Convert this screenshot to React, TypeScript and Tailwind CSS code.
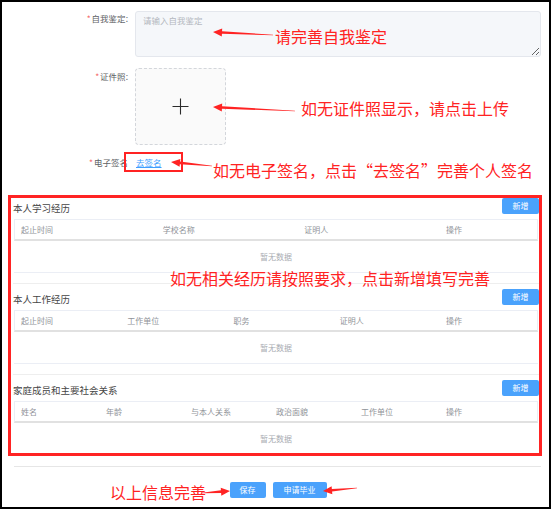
import React from 'react';

const FONT = '"Noto Sans CJK SC", "Noto Sans", sans-serif';

type Section = { title: string; cols: string[] };

const sections: Section[] = [
    { title: '本人学习经历', cols: ['起止时间', '学校名称', '证明人'] },
    { title: '本人工作经历', cols: ['起止时间', '工作单位', '职务', '证明人'] },
    { title: '家庭成员和主要社会关系', cols: ['姓名', '年龄', '与本人关系', '政治面貌', '工作单位'] },
];

// tapered arrow, like the ones drawn by screenshot tools
const arrowPoints = (tx: number, ty: number, hx: number, hy: number) => {
    const dx = hx - tx;
    const dy = hy - ty;
    const len = Math.hypot(dx, dy);
    const ux = dx / len;
    const uy = dy / len;
    const nx = -uy;
    const ny = ux;
    const headLen = 9;
    const headW = 4;
    const neckW = 1.3;
    const bx = hx - ux * headLen;
    const by = hy - uy * headLen;
    const pts = [
        [tx + nx * 0.3, ty + ny * 0.3],
        [bx + nx * neckW, by + ny * neckW],
        [bx + nx * headW, by + ny * headW],
        [hx, hy],
        [bx - nx * headW, by - ny * headW],
        [bx - nx * neckW, by - ny * neckW],
        [tx - nx * 0.3, ty - ny * 0.3],
    ];
    return pts.map((p) => p.join(',')).join(' ');
};

const arrows = [
    [273, 35, 213, 32],
    [295, 111, 213, 107],
    [212, 166, 171, 162],
    [202, 493, 230, 491],
    [357, 488, 323, 491],
];

const Note: React.FC<{ x: number; y: number; children: React.ReactNode }> = ({ x, y, children }) => (
    <div className="absolute text-[16px] leading-[16px] text-[#ff2323] whitespace-nowrap" style={{ left: x, top: y - 8 }}>
        {children}
    </div>
);

const Label: React.FC<{ text: string; colon?: boolean }> = ({ text, colon = true }) => (
    <div className="w-[133px] shrink-0 pr-[7px] text-right text-[8.5px] leading-[14px] text-[#606266]">
        <span className="text-[#f56c6c] mr-[1px]">*</span>
        {text}
        {colon ? ':' : ''}
    </div>
);

const App: React.FC = () => {
    return (
        <div lang="zh-CN" className="relative w-[551px] h-[510px] bg-white" style={{ fontFamily: FONT }}>
            <div className="w-[551px] h-[509px] border-2 border-black">
                <div className="pt-[9px] pr-[8px]">
                    {/* 自我鉴定 */}
                    <div className="flex">
                        <Label text="自我鉴定" />
                        <textarea
                            placeholder="请输入自我鉴定"
                            className="flex-1 h-[46px] px-[7px] py-[1px] bg-[#f5f7fa] border border-[#e4e7ed] rounded-[3px] text-[8.5px] leading-[14px] text-[#606266] placeholder:text-[#b4b8bf] outline-none"
                        />
                    </div>

                    {/* 证件照 */}
                    <div className="flex mt-[11px]">
                        <div className="pt-[1px]">
                            <Label text="证件照" />
                        </div>
                        <div className="w-[91px] h-[77px] bg-[#fafafa] border border-dashed border-[#d3d6db] rounded-[4px] flex items-center justify-center">
                            <svg width="17" height="17" viewBox="0 0 17 17">
                                <path d="M8.5 0.5V16.5M0.5 8.5H16.5" stroke="#2b2b2b" strokeWidth="1.1" />
                            </svg>
                        </div>
                    </div>

                    {/* 电子签名 */}
                    <div className="flex mt-[10px]">
                        <Label text="电子签名" colon={false} />
                        <a className="ml-[1px] text-[8.5px] leading-[14px] text-[#409eff] underline underline-offset-[1px]">去签名</a>
                    </div>
                </div>

                {/* 经历 */}
                <div className="mt-[29px] pl-[11px] pr-[10px]">
                    {sections.map((s, i) => (
                        <div key={s.title} className={i > 0 ? 'mt-[5px]' : ''}>
                            <div className="flex items-center justify-between h-[16px]">
                                <span className="pt-[4px] text-[9.5px] leading-[12px] text-[#454545]">{s.title}</span>
                                <button className="w-[37px] h-[16px] rounded-[2px] bg-[#4aa2fc] text-white text-[8px] leading-none">新增</button>
                            </div>
                            <div className="mt-[5px] mx-[1px]">
                                <div
                                    className="h-[22px] border border-[#ebeef5] border-b-2 border-b-[#e1e1e1] grid items-center text-[8px] text-[#909399]"
                                    style={{ gridTemplateColumns: `repeat(${s.cols.length}, 1fr) 97px` }}
                                >
                                    {[...s.cols, '操作'].map((c) => (
                                        <span key={c} className="pl-[6px] whitespace-nowrap">{c}</span>
                                    ))}
                                </div>
                                <div className="h-[32px] border-b border-[#ebeef5] flex items-center justify-center text-[8px] text-[#a9acb2]">
                                    暂无数据
                                </div>
                            </div>
                            {i < sections.length - 1 && <div className="mt-[10px] h-px bg-[#eeeeee]" />}
                        </div>
                    ))}
                </div>

                <div className="mt-[11px] ml-[12px] mr-[8px] h-px bg-[#e6e6e6]" />

                <div className="mt-[15px] flex justify-center gap-[7px] pl-[5px]">
                    <button className="w-[36px] h-[16px] rounded-[2px] bg-[#4aa2fc] text-white text-[8px] leading-none">保存</button>
                    <button className="w-[54px] h-[16px] rounded-[2px] bg-[#4aa2fc] text-white text-[8px] leading-none">申请毕业</button>
                </div>
            </div>

            {/* annotations */}
            <div className="absolute left-[8px] top-[195px] w-[534px] h-[261px] border-[3px] border-[#ff2323] pointer-events-none" />
            <div className="absolute left-[124px] top-[152px] w-[59px] h-[20px] border-2 border-[#ff2323] pointer-events-none" />

            <svg className="absolute left-0 top-0 pointer-events-none" width="551" height="510">
                {arrows.map((a, i) => (
                    <polygon key={i} points={arrowPoints(a[0], a[1], a[2], a[3])} fill="#ff2323" />
                ))}
            </svg>

            <Note x={275} y={36}>请完善自我鉴定</Note>
            <Note x={301} y={108}>如无证件照显示，请点击上传</Note>
            <Note x={213} y={170}>如无电子签名，点击“去签名”完善个人签名</Note>
            <Note x={170} y={278}>如无相关经历请按照要求，点击新增填写完善</Note>
            <Note x={110} y={492}>以上信息完善</Note>
        </div>
    );
};

export default App;
